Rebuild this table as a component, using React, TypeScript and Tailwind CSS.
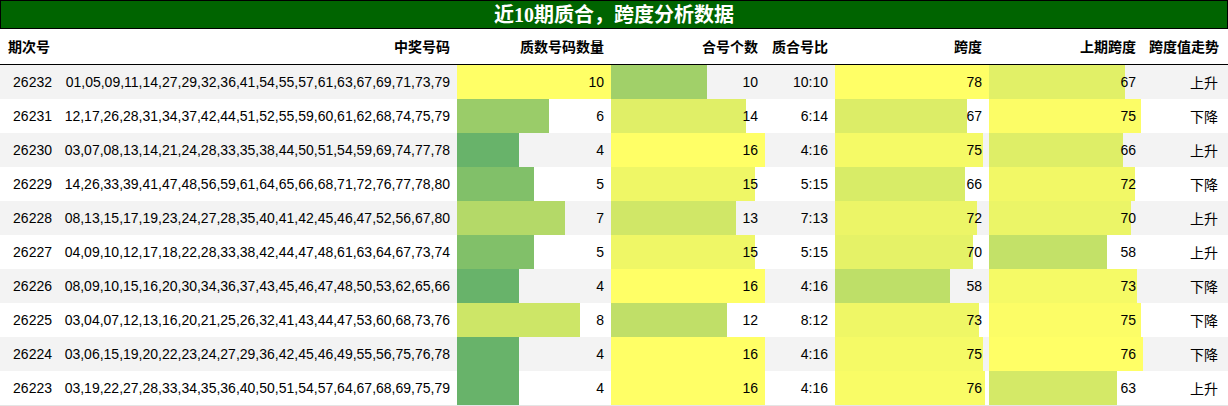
const rows = [
  { id: "26232", nums: "01,05,09,11,14,27,29,32,36,41,54,55,57,61,63,67,69,71,73,79", p: 10, c: 10, span: 78, prev: 67, trend: "上升" },
  { id: "26231", nums: "12,17,26,28,31,34,37,42,44,51,52,55,59,60,61,62,68,74,75,79", p: 6, c: 14, span: 67, prev: 75, trend: "下降" },
  { id: "26230", nums: "03,07,08,13,14,21,24,28,33,35,38,44,50,51,54,59,69,74,77,78", p: 4, c: 16, span: 75, prev: 66, trend: "上升" },
  { id: "26229", nums: "14,26,33,39,41,47,48,56,59,61,64,65,66,68,71,72,76,77,78,80", p: 5, c: 15, span: 66, prev: 72, trend: "下降" },
  { id: "26228", nums: "08,13,15,17,19,23,24,27,28,35,40,41,42,45,46,47,52,56,67,80", p: 7, c: 13, span: 72, prev: 70, trend: "上升" },
  { id: "26227", nums: "04,09,10,12,17,18,22,28,33,38,42,44,47,48,61,63,64,67,73,74", p: 5, c: 15, span: 70, prev: 58, trend: "上升" },
  { id: "26226", nums: "08,09,10,15,16,20,30,34,36,37,43,45,46,47,48,50,53,62,65,66", p: 4, c: 16, span: 58, prev: 73, trend: "下降" },
  { id: "26225", nums: "03,04,07,12,13,16,20,21,25,26,32,41,43,44,47,53,60,68,73,76", p: 8, c: 12, span: 73, prev: 75, trend: "下降" },
  { id: "26224", nums: "03,06,15,19,20,22,23,24,27,29,36,42,45,46,49,55,56,75,76,78", p: 4, c: 16, span: 75, prev: 76, trend: "下降" },
  { id: "26223", nums: "03,19,22,27,28,33,34,35,36,40,50,51,54,57,64,67,68,69,75,79", p: 4, c: 16, span: 76, prev: 63, trend: "上升" },
];

// green -> yellow scale, by share of the column max
function barColor(r: number) {
  const t = Math.min(1, Math.max(0, (r - 0.4) / 0.6));
  const R = Math.round(104 + t * 151);
  const G = Math.round(179 + t * 76);
  const B = Math.round(106 - t * 4);
  return `rgb(${R},${G},${B})`;
}

function BarCell({ value, max }: { value: number; max: number }) {
  const r = value / max;
  const color = barColor(r);
  return (
    <div
      className="w-[154px] h-full flex items-center justify-end pr-[7px] bg-no-repeat"
      style={{
        backgroundImage: `linear-gradient(${color}, ${color})`,
        backgroundSize: `${Math.round(r * 154)}px 100%`,
      }}
    >
      {value}
    </div>
  );
}

export default function App() {
  return (
    <div className="w-[1228px] h-[406px] bg-white text-black text-[14px] font-['Liberation_Sans','Noto_Sans_CJK_SC',sans-serif]">
      <div className="h-[29px] border border-black bg-[#006400] flex items-center justify-center text-white text-[20px] font-bold font-['Liberation_Serif','Noto_Sans_CJK_SC',serif]">
        近10期质合，跨度分析数据
      </div>
      <div className="h-[36px] border-b border-black flex items-center font-bold font-['Noto_Sans_CJK_SC',sans-serif]">
        <div className="w-[58px] pl-[8px]">期次号</div>
        <div className="w-[399px] text-right pr-[7px]">中奖号码</div>
        <div className="w-[154px] text-right pr-[7px]">质数号码数量</div>
        <div className="w-[154px] text-right pr-[7px]">合号个数</div>
        <div className="w-[70px] text-right pr-[7px]">质合号比</div>
        <div className="w-[154px] text-right pr-[7px]">跨度</div>
        <div className="w-[154px] text-right pr-[7px]">上期跨度</div>
        <div className="w-[85px] text-right pr-[9px]">跨度值走势</div>
      </div>
      <div className="border-b border-[#e5e5e5]">
        {rows.map((row, i) => (
          <div
            key={row.id}
            className={`h-[34px] flex items-center ${i % 2 === 0 ? "bg-[#f3f3f3]" : "bg-white"}`}
          >
            <div className="w-[58px] text-right pr-[6px]">{row.id}</div>
            <div className="w-[399px] text-right pr-[7px]">{row.nums}</div>
            <BarCell value={row.p} max={10} />
            <BarCell value={row.c} max={16} />
            <div className="w-[70px] text-right pr-[7px]">
              {row.p}:{row.c}
            </div>
            <BarCell value={row.span} max={78} />
            <BarCell value={row.prev} max={76} />
            <div className="w-[85px] text-right pr-[10px] font-['Noto_Sans_CJK_SC',sans-serif]">
              {row.trend}
            </div>
          </div>
        ))}
      </div>
    </div>
  );
}
